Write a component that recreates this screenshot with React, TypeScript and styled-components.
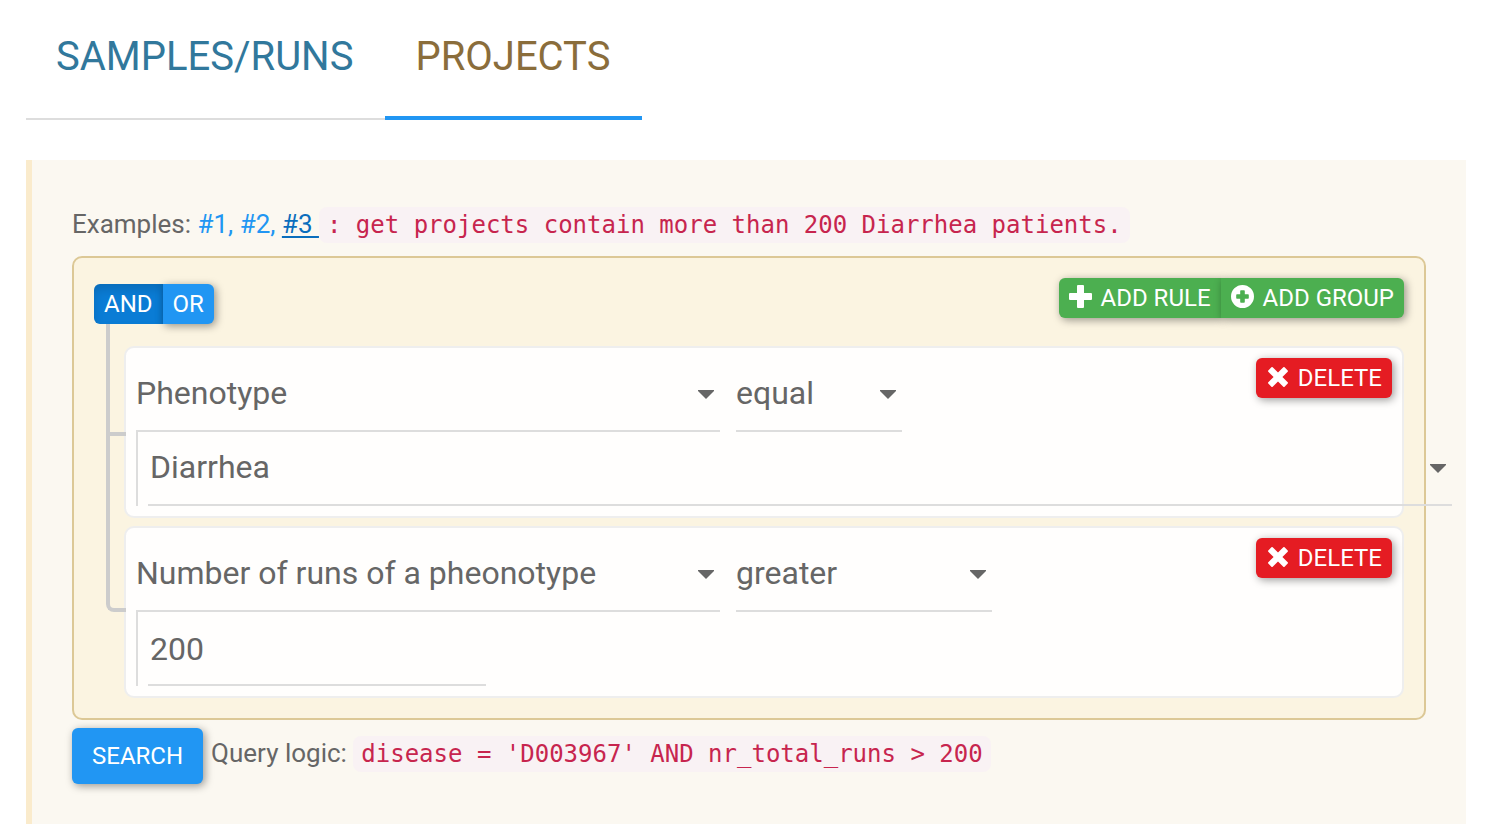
import React, { useState } from "react";
import styled, { createGlobalStyle, css } from "styled-components";

const GlobalStyle = createGlobalStyle`
  *, *::before, *::after { box-sizing: border-box; }
  body {
    margin: 0;
    background: #fff;
    color: #666;
    font-family: Roboto, "Liberation Sans", sans-serif;
    font-size: 26px;
    line-height: 48px;
  }
  button, input, select { font-family: inherit; margin: 0; }
`;

const Page = styled.main`
  padding: 0 22px 16px 26px;
`;

const Tabs = styled.nav`
  display: flex;
  margin-bottom: 40px;
`;

const Tab = styled.a<{ $active?: boolean }>`
  padding: 33px 32px 39px 30px;
  font-size: 40px;
  line-height: 48px;
  text-decoration: none;
  color: ${(p) => (p.$active ? "#8a6d3b" : "#31789c")};
  box-shadow: ${(p) => (p.$active ? "inset 0 -4px 0 #2196f3" : "inset 0 -2px 0 #ddd")};
`;

const Panel = styled.section`
  padding: 40px;
  border-left: 6px solid #faebcc;
  background: #fbf8f1;
`;

const Examples = styled.p`
  margin: 0 0 8px;
  white-space: pre-wrap;
`;

const ExampleLink = styled.a<{ $current?: boolean }>`
  color: ${(p) => (p.$current ? "#0a6ebd" : "#2196f3")};
  text-decoration: ${(p) => (p.$current ? "underline 2px" : "none")};
  text-underline-offset: 3px;
  text-decoration-skip-ink: none;
`;

const Code = styled.code`
  padding: 4px 8px;
  border-radius: 8px;
  background: #f9f2f4;
  color: #c7254e;
  font-family: "DejaVu Sans Mono", monospace;
  font-size: 24px;
  line-height: 24px;
`;

const Group = styled.div`
  padding: 20px;
  border: 2px solid #dcc896;
  border-radius: 10px;
  background: #fbf4e1;
`;

const GroupHeader = styled.div`
  display: flex;
  justify-content: space-between;
  align-items: flex-start;
  margin-bottom: 22px;
`;

const Conditions = styled.div`
  display: flex;
  padding-top: 6px;
`;

const Actions = styled.div`
  display: flex;
`;

const tones = { blue: "#2196f3", green: "#4caf50", red: "#e51c23" };

const Button = styled.button<{ $tone: keyof typeof tones; $pressed?: boolean; $large?: boolean }>`
  display: flex;
  align-items: center;
  flex: none;
  gap: 8px;
  height: ${(p) => (p.$large ? 56 : 40)}px;
  padding: 0 ${(p) => (p.$large ? 20 : 10)}px;
  border: 0;
  border-radius: 6px;
  background: ${(p) => tones[p.$tone]};
  color: #fff;
  font-size: 24px;
  line-height: 36px;
  white-space: nowrap;
  cursor: pointer;
  box-shadow: 2px 2px 8px rgba(0, 0, 0, 0.4);

  ${Conditions} > &:first-child, ${Actions} > &:first-child {
    border-top-right-radius: 0;
    border-bottom-right-radius: 0;
  }
  ${Conditions} > &:last-child, ${Actions} > &:last-child {
    border-top-left-radius: 0;
    border-bottom-left-radius: 0;
  }
  ${(p) =>
    p.$pressed &&
    css`
      background: #0a7cd5;
      box-shadow: inset 0 6px 10px rgba(0, 0, 0, 0.125);
    `}
`;

const Rules = styled.ul`
  display: flex;
  flex-direction: column;
  gap: 8px;
  margin: 0;
  padding: 0 0 0 30px;
  list-style: none;
`;

/* The pseudo-elements draw the branch lines that join each rule to its group. */
const Rule = styled.li`
  position: relative;
  padding: 10px;
  border: 2px solid #eee;
  border-radius: 10px;
  background: #fffefd;

  &::before, &::after {
    content: "";
    position: absolute;
    left: -20px;
    border: 0 solid #ccc;
    border-left-width: 4px;
  }
  &::before {
    top: -12px;
    width: 20px;
    height: calc(50% + 16px);
    border-bottom-width: 4px;
  }
  &::after {
    top: 50%;
    bottom: -2px;
  }
  &:first-child::before {
    top: -24px;
    height: calc(50% + 28px);
  }
  &:last-child::before {
    height: calc(50% + 12px);
    border-bottom-left-radius: 8px;
  }
  &:last-child::after {
    display: none;
  }
`;

const RuleRow = styled.div`
  display: flex;
  align-items: flex-start;
  gap: 16px;
`;

const Remove = styled.div`
  margin-left: auto;
`;

const SelectBox = styled.div<{ $width: string }>`
  position: relative;
  flex: none;
  width: ${(p) => p.$width};

  svg {
    position: absolute;
    right: 6px;
    top: 32px;
    pointer-events: none;
  }
`;

const control = css`
  display: block;
  height: 74px;
  padding: 0;
  border: 0;
  border-bottom: 2px solid #ddd;
  border-radius: 0;
  outline: 0;
  background: transparent;
  color: #666;
  font-size: 32px;
  line-height: 44px;
`;

const ValueArea = styled.div`
  padding-left: 10px;
  border-left: 2px solid #ddd;
`;

const Select = styled.select`
  ${control}
  width: 100%;
  padding-bottom: 2px;
  appearance: none;

  ${ValueArea} & {
    padding-left: 2px;
  }
`;

const ValueInput = styled.input`
  ${control}
  width: 338px;
  padding: 2px 0 0 2px;
`;

const Footer = styled.div`
  display: flex;
  align-items: flex-start;
  gap: 8px;
  margin-top: 8px;
`;

const QueryLogic = styled.p`
  margin: 0;
  line-height: 50px;
`;

function Caret() {
  return (
    <svg width="16" height="9" viewBox="0 0 16 9" aria-hidden="true">
      <path d="M0 0h16v1L8 9 0 1z" fill="#666" />
    </svg>
  );
}

function PlusIcon() {
  return (
    <svg width="23" height="23" viewBox="0 0 23 23" aria-hidden="true">
      <path
        fill="#fff"
        d="M9 0h5q1 0 1 1v7h7q1 0 1 1v5q0 1-1 1h-7v7q0 1-1 1H9q-1 0-1-1v-7H1q-1 0-1-1V9q0-1 1-1h7V1q0-1 1-1z"
      />
    </svg>
  );
}

function PlusCircleIcon() {
  return (
    <svg width="23" height="23" viewBox="0 0 23 23" aria-hidden="true">
      <path
        fill="#fff"
        fillRule="evenodd"
        d="M11.500 0a11.500 11.500 0 1 1 0 23 11.500 11.500 0 0 1 0-23zM10 5.200q-.8 0-.8.800v3.200H6q-.8 0-.8.800v3q0 .8.800.800h3.200V17q0 .8.800.800h3q.8 0 .8-.8v-3.200H17q.8 0 .8-.8v-3q0-.8-.8-.8h-3.200V6q0-.8-.8-.8z"
      />
    </svg>
  );
}

function CrossIcon() {
  return (
    <svg width="20" height="20" viewBox="0 0 20 20" aria-hidden="true">
      <path
        fill="#fff"
        d="M4.700.3 10 5.600 15.300.3q.7-.6 1.300 0l3.100 3.100q.6.6 0 1.300L14.400 10l5.300 5.300q.6.700 0 1.300l-3.100 3.100q-.6.6-1.300 0L10 14.400l-5.300 5.300q-.7.6-1.300 0L.3 16.600q-.6-.6 0-1.300L5.600 10 .3 4.700q-.6-.7 0-1.300L3.400.3q.6-.6 1.300 0z"
      />
    </svg>
  );
}

const IconSlot = styled.span`
  display: flex;
  justify-content: center;
  width: 24px;
  padding-bottom: 3px;
`;

interface DropdownProps {
  label: string;
  width: string;
  options: string[];
}

function Dropdown({ label, width, options }: DropdownProps) {
  return (
    <SelectBox $width={width}>
      <Select aria-label={label}>
        {options.map((option) => (
          <option key={option}>{option}</option>
        ))}
      </Select>
      <Caret />
    </SelectBox>
  );
}

interface RuleItemProps {
  field: string;
  operator: string;
  operatorWidth: string;
  children: React.ReactNode;
}

function RuleItem({ field, operator, operatorWidth, children }: RuleItemProps) {
  return (
    <Rule>
      <RuleRow>
        <Dropdown label="Field" width="584px" options={[field]} />
        <Dropdown label="Operator" width={operatorWidth} options={[operator]} />
        <Remove>
          <Button type="button" $tone="red">
            <IconSlot><CrossIcon /></IconSlot>
            DELETE
          </Button>
        </Remove>
      </RuleRow>
      <ValueArea>{children}</ValueArea>
    </Rule>
  );
}

export default function App() {
  const [condition, setCondition] = useState("AND");

  return (
    <>
      <GlobalStyle />
      <Page>
        <Tabs>
          <Tab href="#samples">SAMPLES/RUNS</Tab>
          <Tab href="#projects" $active aria-current="page">PROJECTS</Tab>
        </Tabs>
        <Panel>
          <Examples>
            Examples: <ExampleLink href="#example-1">#1, </ExampleLink>
            <ExampleLink href="#example-2">#2, </ExampleLink>
            <ExampleLink href="#example-3" $current>{"#3 "}</ExampleLink>
            <Code>: get projects contain more than 200 Diarrhea patients.</Code>
          </Examples>
          <Group>
            <GroupHeader>
              <Conditions>
                {["AND", "OR"].map((name) => (
                  <Button
                    key={name}
                    type="button"
                    $tone="blue"
                    $pressed={condition === name}
                    aria-pressed={condition === name}
                    onClick={() => setCondition(name)}
                  >
                    {name}
                  </Button>
                ))}
              </Conditions>
              <Actions>
                <Button type="button" $tone="green">
                  <IconSlot><PlusIcon /></IconSlot>
                  ADD RULE
                </Button>
                <Button type="button" $tone="green">
                  <IconSlot><PlusCircleIcon /></IconSlot>
                  ADD GROUP
                </Button>
              </Actions>
            </GroupHeader>
            <Rules>
              <RuleItem field="Phenotype" operator="equal" operatorWidth="166px">
                <Dropdown label="Phenotype value" width="calc(100% + 60px)" options={["Diarrhea"]} />
              </RuleItem>
              <RuleItem field="Number of runs of a pheonotype" operator="greater" operatorWidth="256px">
                <ValueInput aria-label="Number of runs" type="text" defaultValue="200" />
              </RuleItem>
            </Rules>
          </Group>
          <Footer>
            <Button type="button" $tone="blue" $large>SEARCH</Button>
            <QueryLogic>
              Query logic: <Code>disease = 'D003967' AND nr_total_runs &gt; 200</Code>
            </QueryLogic>
          </Footer>
        </Panel>
      </Page>
    </>
  );
}
